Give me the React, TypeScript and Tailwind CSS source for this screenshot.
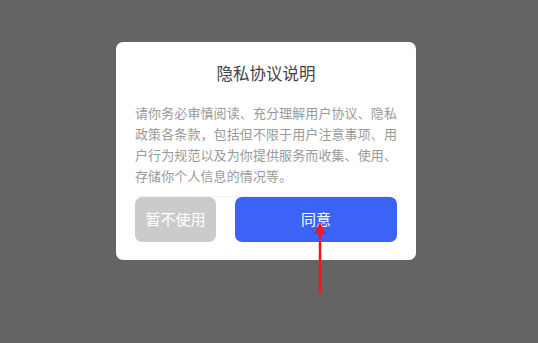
import React from "react";

export default function App() {
  const font = { fontFamily: '"Noto Sans CJK SC", "Noto Sans", sans-serif' };
  return (
    <div className="relative w-[538px] h-[343px] bg-[#646464] overflow-hidden" style={font}>
      <div className="absolute left-[116px] top-[42px] w-[300px] rounded-[7px] bg-white px-[19px] pt-[19px] pb-[18px]">
        <div className="h-[24px] text-center text-[16.5px] leading-[24px] text-[#444]">隐私协议说明</div>
        <p className="mt-[17px] text-[13px] leading-[21px] tracking-[0.1px] text-[#999]">
          请你务必审慎阅读、充分理解用户协议、隐私政策各条款，包括但不限于用户注意事项、用户行为规范以及为你提供服务而收集、使用、存储你个人信息的情况等。
        </p>
        <div className="mt-[10px] h-px bg-[#f0f0f0]" />
        <div className="flex gap-[19px]">
          <div className="flex h-[45px] w-[81px] items-center justify-center rounded-[7px] bg-[#cbcbcb] text-[15px] text-white">暂不使用</div>
          <div className="flex h-[45px] flex-1 items-center justify-center rounded-[7px] bg-[#3b63f6] text-[15px] text-white">同意</div>
        </div>
      </div>
      <svg className="absolute left-[310px] top-[218px]" width="20" height="80" viewBox="0 0 20 80">
        <line x1="10" y1="12" x2="10" y2="74" stroke="#f01818" strokeWidth="2.5" strokeLinecap="round" />
        <polygon points="10,4 4.5,16 15.5,16" fill="#f01818" />
      </svg>
    </div>
  );
}
